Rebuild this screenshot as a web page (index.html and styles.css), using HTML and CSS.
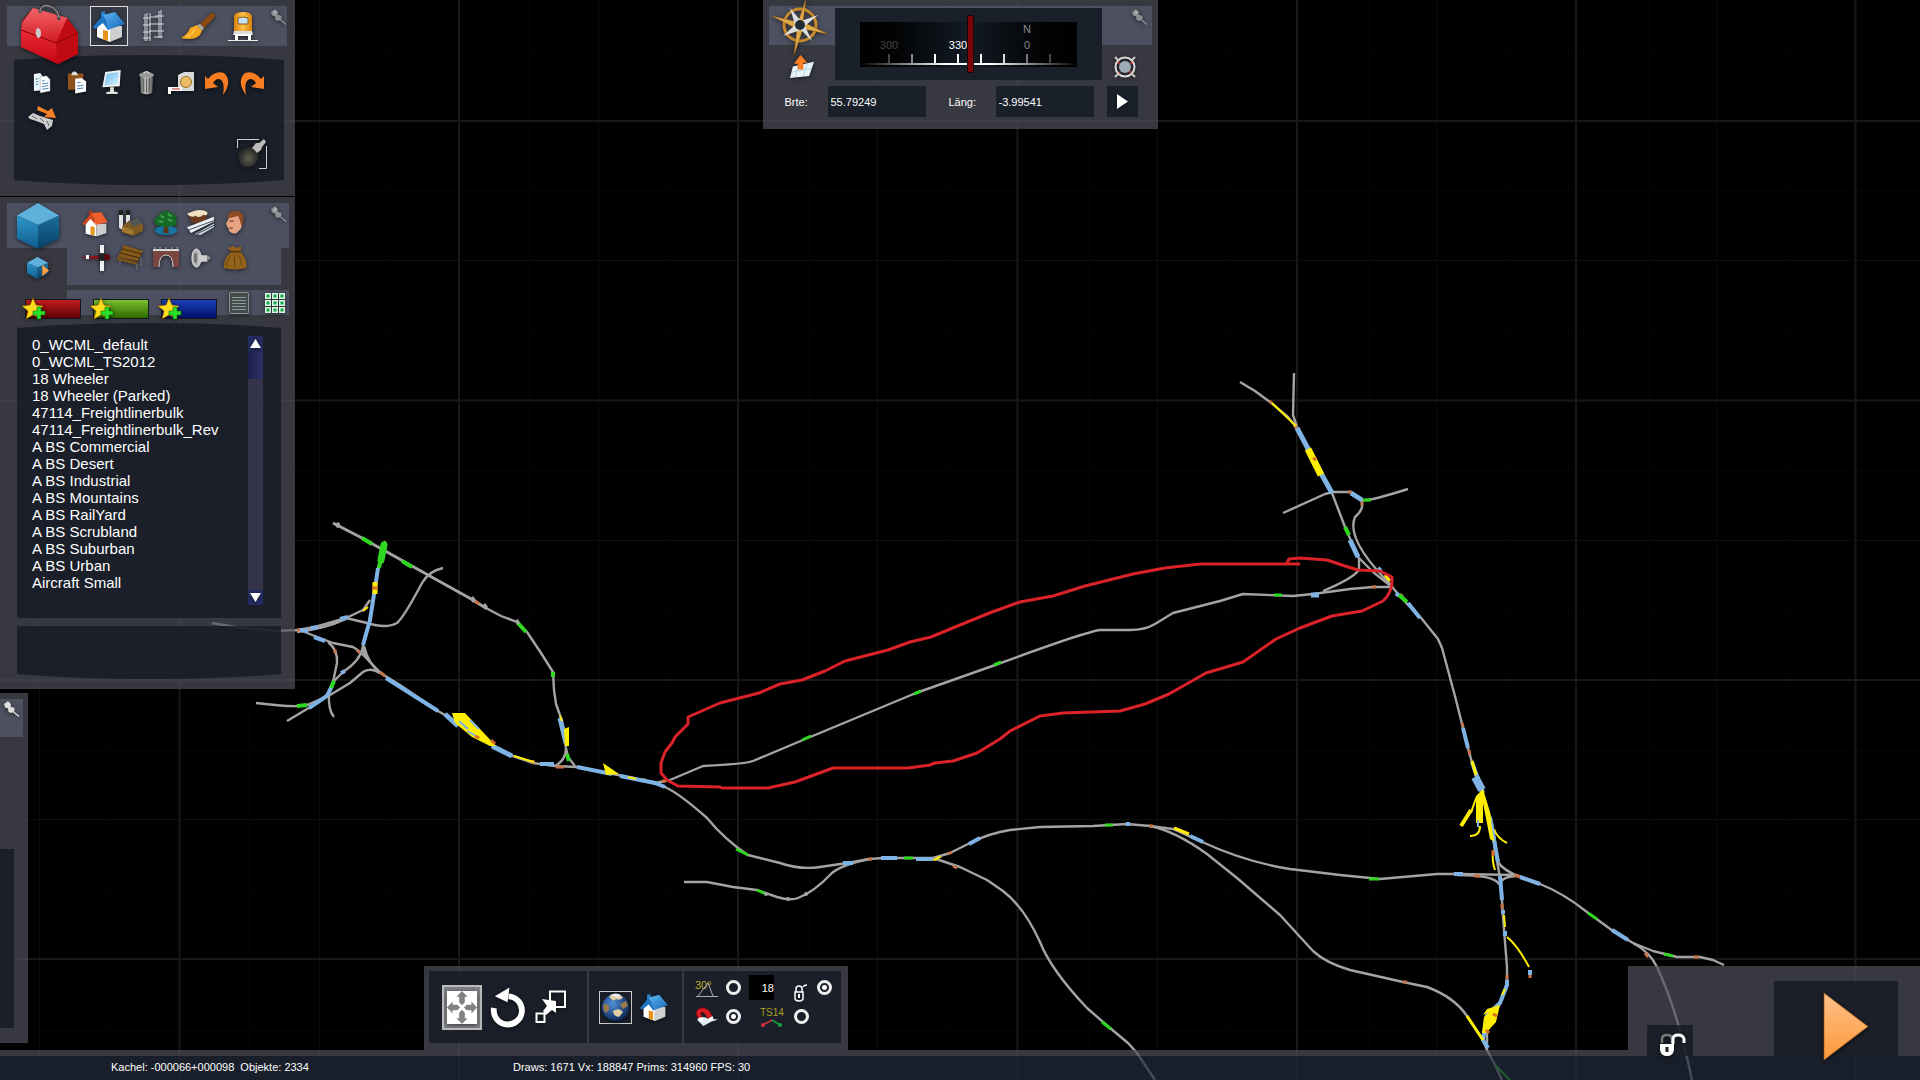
FILE: index.html
```html
<!DOCTYPE html>
<html lang="de">
<head>
<meta charset="utf-8">
<meta name="viewport" content="width=device-width, initial-scale=1">
<title>Streckeneditor</title>
<link rel="stylesheet" href="styles.css">
</head>
<body>
<svg class="defs" width="0" height="0" aria-hidden="true">
  <defs>
    <linearGradient id="gBlueRoof" x1="0" y1="0" x2="1" y2="1"><stop offset="0" stop-color="#5db8f5"/><stop offset="1" stop-color="#1463b4"/></linearGradient>
    <linearGradient id="gRed" x1="0" y1="0" x2="0" y2="1"><stop offset="0" stop-color="#f4666a"/><stop offset="1" stop-color="#d01820"/></linearGradient>
    <linearGradient id="gRedFront" x1="0" y1="0" x2="0" y2="1"><stop offset="0" stop-color="#e82a34"/><stop offset="1" stop-color="#c40812"/></linearGradient>
    <linearGradient id="gOrange" x1="0" y1="0" x2="0" y2="1"><stop offset="0" stop-color="#ffc08a"/><stop offset="1" stop-color="#ff9838"/></linearGradient>
    <linearGradient id="gTrain" x1="0" y1="0" x2="1" y2="0"><stop offset="0" stop-color="#d8820c"/><stop offset=".5" stop-color="#ffc04a"/><stop offset="1" stop-color="#d8820c"/></linearGradient>
    <linearGradient id="gSteel" x1="0" y1="0" x2="1" y2="0"><stop offset="0" stop-color="#555"/><stop offset=".45" stop-color="#c8c8c8"/><stop offset="1" stop-color="#555"/></linearGradient>
    <linearGradient id="gScreen" x1="0" y1="0" x2="1" y2="1"><stop offset="0" stop-color="#6db9ea"/><stop offset="1" stop-color="#d4f3ff"/></linearGradient>
    <linearGradient id="gCubeL" x1="0" y1="0" x2="0" y2="1"><stop offset="0" stop-color="#2f97c9"/><stop offset="1" stop-color="#0d5c8c"/></linearGradient>
    <linearGradient id="gCubeR" x1="0" y1="0" x2="0" y2="1"><stop offset="0" stop-color="#1b6f9f"/><stop offset="1" stop-color="#0a4066"/></linearGradient>
    <linearGradient id="gGauge" x1="0" y1="0" x2="1" y2="0"><stop offset="0" stop-color="#000"/><stop offset=".15" stop-color="#020304"/><stop offset=".5" stop-color="#141b25"/><stop offset=".85" stop-color="#020304"/><stop offset="1" stop-color="#000"/></linearGradient>
    <linearGradient id="gLine" x1="0" y1="0" x2="1" y2="0"><stop offset="0" stop-color="#fff" stop-opacity="0"/><stop offset=".4" stop-color="#fff"/><stop offset=".6" stop-color="#fff"/><stop offset="1" stop-color="#fff" stop-opacity="0"/></linearGradient>
    <radialGradient id="gBeam" cx=".5" cy=".6" r=".6"><stop offset="0" stop-color="#625f50"/><stop offset="1" stop-color="#14171c"/></radialGradient>
    <radialGradient id="gGlobe" cx=".4" cy=".35" r=".7"><stop offset="0" stop-color="#4f8fd8"/><stop offset="1" stop-color="#0a2350"/></radialGradient>
    <pattern id="gridFine" x="39" y="50" width="140" height="140" patternUnits="userSpaceOnUse"><path d="M70.500 0V140M0 1.500H140" stroke="#060606"/></pattern>
    <symbol id="pin" viewBox="0 0 18 18"><path d="M2 4 L6 1 L9 4 L8.500 6.500 L12.500 8 L12.500 11 L9.500 13 L6.500 12 L6 8.500 L3 7.500Z" fill="currentColor"/><path d="M11 11.500L17 16.500" stroke="currentColor" stroke-width="1.500"/><path d="M4 4l3-1 1 1-2 3z" fill="#fff" opacity=".3"/></symbol>
    <symbol id="home" viewBox="0 0 32 34"><path d="M4 19V28L17 33V17L10 10Z" fill="#fff"/><path d="M17 33L29 28V17L17 17Z" fill="#cfcfcf"/><path d="M10 21l5 1v10l-5-2z" fill="#e8921c"/><path d="M8 3l4-1v6l-4 3z" fill="#2a7fc8"/><path d="M0 18L10 6L17 20L15 21L10 14L2 20Z" fill="#1d74c4"/><path d="M10 6L22 3L32 15L17 20Z" fill="url(#gBlueRoof)"/></symbol>
    <symbol id="star" viewBox="0 0 24 22"><path d="M11 0L14 7L21 8L16 13L18 20L11 17L4 21L6 13L0 8L8 7Z" fill="#ffdc1e" stroke="#8a5a00" stroke-width=".6"/><path d="M15 9h4v4h4v4h-4v4h-4v-4h-4v-4h4z" fill="#2ae02a" stroke="#087008" stroke-width=".6"/></symbol>
  </defs>
</svg>

<svg class="map" viewBox="0 0 1920 1080" preserveAspectRatio="xMidYMid slice" role="img" aria-label="Gleisplan">
  <rect width="1920" height="1080" fill="#000"/>
  <rect width="1920" height="1080" fill="url(#gridFine)"/>
  <path class="grid-mid" d="M39.500 0V1080M319.500 0V1080M598.500 0V1080M877.500 0V1080M1157.500 0V1080M1436.500 0V1080M1716.500 0V1080M0 260.500H1920M0 540.500H1920M0 819.500H1920"/>
  <path class="grid-main" d="M179.500 0V1080M459 0V1080M738 0V1080M1017.500 0V1080M1297 0V1080M1576 0V1080M1855.500 0V1080M0 121H1920M0 400.500H1920M0 680H1920M0 959H1920"/>

  <g class="track">
    <path stroke-width="3" d="M333 523L362 538L428 575L473 600L484 607"/>
    <path d="M484 607L501 616L517 622L527 632L541 653L553 672L554 690L556 704L561 718L566 748L568 757L575 766M566 748Q566 760 555 766"/>
    <path d="M212 623L235 627L275 631L297 630L315 627L346 618L363 610L370 600M297 632Q325 629 346 619"/>
    <path d="M385 541L378 568L375 588L372 607L369 623L363 645Q361 656 382 674M364 646Q368 663 380 673"/>
    <path d="M346 618L367 623Q386 629 397 623Q404 617 422 583Q429 571 443 568"/>
    <path d="M300 630L317 637L333 643L353 647Q362 652 380 673"/>
    <path d="M328 642Q338 650 337 663L333 682L329 693Q328 710 334 717"/>
    <path d="M363 647Q360 661 343 672L333 682L327 695L312 706L287 721"/>
    <path d="M380 673Q370 667 363 672L350 683L330 695L307 705Q295 708 256 703"/>
    <path d="M382 674L400 685L438 711L450 718L493 746L510 755L533 763L555 766L577 767L603 772L633 778L655 783"/>
    <path d="M655 783L665 787Q680 794 707 818Q725 840 748 855L780 863Q800 870 820 867L847 863L870 859L883 858L933 858L950 853L970 843Q990 833 1010 830L1040 827L1093 826L1127 824L1150 826L1173 829L1200 841Q1245 862 1290 869L1340 875L1380 879L1437 874L1457 874L1517 875L1540 884Q1563 893 1587 912L1613 931L1633 943L1653 951L1677 957L1700 957L1713 960L1724 965"/>
    <path d="M1633 943Q1650 952 1657 967Q1678 1012 1692 1080"/>
    <path d="M684 882H707L733 887L757 890L777 897Q790 901 798 898Q814 892 832 873Q843 864 870 859"/>
    <path d="M933 858L960 867L987 880L1003 891Q1024 907 1040 942Q1051 970 1087 1008L1110 1028L1128 1043L1137 1053L1155 1080"/>
    <path d="M1150 826Q1175 831 1207 854L1237 878L1280 915L1313 951Q1326 963 1350 970L1403 982L1427 987Q1454 997 1467 1016L1483 1040L1487 1050L1495 1065L1502 1080"/>
    <path d="M1240 382L1255 391L1270 402L1288 417L1297 428L1310 453L1322 475L1332 493L1345 527L1358 557L1373 572L1392 587L1408 605L1422 619L1438 639L1442 648L1456 700L1469 752L1477 780L1490 817L1495 850L1501 883L1503 917L1507 967V983L1500 1003L1487 1028V1050"/>
    <path d="M1294 373L1293 415L1297 427M1283 513L1325 494L1333 492H1350L1362 500Q1367 502 1408 489M1362 500V507Q1361 512 1355 517Q1345 540 1393 587M1359 557V570Q1352 579 1323 591"/>
    <path d="M1390 587H1373L1350 589L1313 594L1293 596L1243 594L1220 601L1173 613L1155 624Q1145 630 1130 630H1100Q1085 632 998 664L916 693L803 740L753 761Q745 764 703 766L670 780L655 783"/>
    <path d="M1498 862Q1503 870 1518 876M1457 875Q1494 875 1499 884Q1503 876 1518 876"/>
  </g>

  <g class="edge">
    <path d="M297 630h3M380 672l5 4M556 767h8M640 780h6M662 781h4M1269 401l3 2M1294 425l3 4M1348 492h4M1362 502v3M1372 587h4M1400 594l3 3M1462 723l1 4M1469 750l1 5M1514 875l7 2M1474 876h6M1502 904v5M1507 975v4M1403 982h4M1694 957h5M1645 953l3 4M868 859h4M948 854l4-2M953 866l4 2M1149 826h4M475 601l4 3M335 649v4M357 650l3 3M531 762h4"/>
  </g>
  <g class="signal">
    <path stroke-width="4" d="M378 568L375 588L370 620L363 645M300 630l8 1M311 628l7-1M340 619l8-2M314 637l11 4M386 678L438 711"/>
    <path stroke-width="4" d="M341 673l4-2M332 686l-5 10L309 708"/>
    <path stroke-width="5" d="M445 714L458 726M492 746L512 756M560 718l6 25M1297 428L1322 475L1332 493M1351 493l11 7M1350 540l8 17M1311 595h8"/>
    <path stroke-width="4" d="M540 764h14M577 767L612 774M620 776l35 7l10 4M843 863h10M881 858h16M916 859h17M969 844l11-6M1126 824h4M1190 836l13 6M1396 593l3 3M1408 603l12 15M1378 568l3 3"/>
    <path stroke-width="4" d="M1463 728L1468 748M1472 762L1483 793M1454 874h9M1520 877l20 7M1612 930l16 10M1490 817l8 45M1500 876l2 24M1503 910v4M1505 931v5M1507 980v5L1500 1003L1487 1015L1483 1040L1488 1048M1530 970v5"/>
    <path stroke-width="8" d="M1475 777L1482 790"/>
  </g>
  <g class="siding">
    <path stroke-width="5" d="M375 582v12"/>
    <path stroke-width="2" d="M363 611l5-4M514 756l20 6M560 716l2 5M628 777l8 2M1272 403L1296 426M1504 915l1 12M1507 937Q1518 946 1529 967M1505 989l-3 6"/>
    <path class="fill" d="M452 713h13l31 33h-6l-18-9-17-14zM564 729l5-2v19h-4zM603 763l16 11-13 1zM932 860l7-4 3 1-7 4z"/>
    <path stroke-width="3" d="M1174 828l15 6M1467 1016l16 24M1472 761l4 14M1385 575l5 6"/>
    <path stroke-width="7" d="M1308 449L1321 475"/>
    <path class="fill" d="M1483 789l7 23 5 30-5-3-7-36v20h-7v-22l-4 12-2-1 6-16z"/>
    <path stroke-width="4" d="M1471 810L1461 826"/>
    <path stroke-width="2" d="M1480 826q0 10-10 10M1494 829q3 9 13 14M1493 852q-1 10 2 18"/>
    <path class="fill" d="M1500 1005l-4 17-10 11h-4l2-16 5-5-6 3 4-6z"/>
  </g>
  <path d="M459 721l9 8m2-9l9 9m-12 2l9 5M1478 820v7M1492 822l4 24" stroke="#7fb2e5" stroke-width="2"/>
  <g class="marker">
    <path stroke-width="7" stroke-linecap="round" d="M384 545L381 560"/>
    <path stroke-width="4" d="M381 558l-2 10M362 538l10 6M402 561l10 6M518 623l8 9M553 672v5M334 681l-3 7M297 706l10-1M567 754l2 7M1345 527l4 8M1399 595l8 7"/>
    <path d="M802 740l9-4M736 849l12 6M757 890l9 4M904 858h9M1105 825h8M1274 595h8M1369 879h10M1363 500h8M1588 913l9 6M1664 954l9 2M1102 1022l9 7M914 694l7-3M994 665l7-3"/>
    <path d="M1495 1065l15 15" stroke-width="2"/>
  </g>
  <path d="M372 588h6M475 736l4 2M491 740l4 4M1313 458l3 2M1493 850v6M1486 1030l3 3M1493 1014l4 2M1530 975v3" stroke="#d8702c" stroke-width="3"/>
  <g fill="#a5a5a5"><path d="M334 524l5-2 2 5-4 1zM470 599l3-3 3 4-3 3zM482 606l3-3 3 4-3 3zM515 621l3-2 2 4-3 2z"/><circle cx="766" cy="894" r="2"/><circle cx="788" cy="899" r="2"/><circle cx="806" cy="894" r="2"/></g>
  <path class="outline" d="M1299 564H1200L1165 568L1133 574L1085 586L1053 596L1020 602L992 612L960 625L931 637L910 642L888 650L845 661L825 671L802 680L780 684L759 693L720 703L688 717V724L675 737L672 743L665 752L661 763V773L667 780L678 786L720 787L722 788H768L795 782L833 768H908L930 765L935 763L953 761L977 753L1000 739L1010 731L1040 716L1063 713L1120 711L1145 704L1169 694L1206 673L1243 662L1276 639L1300 628L1332 616L1362 611L1383 601Q1393 592 1392 577L1380 571L1358 570L1345 566L1327 560L1300 558L1289 559L1287 563"/>
</svg>

<div class="hud">
  <aside class="left">
    <section class="window tools-window" aria-label="Werkzeuge">
      <div class="tabs">
        <button class="toolbox" aria-label="Werkzeugkasten"><svg width="58" height="60" viewBox="0 0 58 60"><path d="M1 16L12 3L46 13L57 28V49L37 59L0 42Z" fill="#a80810"/><path d="M1 18L12 3L47 13L35 38L0 25Z" fill="url(#gRed)"/><path d="M0 25L35 38L37 59L0 42Z" fill="url(#gRedFront)"/><path d="M35 38L46 13L57 28V49L37 59Z" fill="#c00a14"/><path d="M0 25L35 38L57 28" stroke="#8c0008" fill="none"/><path d="M19 8C18-4 38 0 38 15" stroke="#444" stroke-width="3" fill="none"/><path d="M19 7C19-4 37 0 38 13" stroke="#aaa" stroke-width="1" fill="none"/><path d="M16 23q4 0 4 5t-3 5q-4-4-1-10z" fill="#ccc"/></svg></button>
        <button class="tab selected" aria-label="Szenerie"><svg width="32" height="34"><use href="#home"/></svg></button>
        <button class="tab" aria-label="Gleise"><svg width="24" height="34" viewBox="0 0 24 34"><path d="M3 5V32M5 4V32M17 2V29M19 1V29M1 9h7M13 7h9M1 16h7M7 15h15M1 23h7M7 22h15M1 29h7M12 28h9M8 4v28M8 8h8" stroke="#d8dde2" stroke-width="1" fill="none"/></svg></button>
        <button class="tab" aria-label="Pinsel"><svg width="34" height="28" viewBox="0 0 34 28"><path d="M18 13L30 1L34 2L33 6L22 17Z" fill="#8a4a12"/><path d="M16 13l3-1 4 4-2 3z" fill="#aaa"/><path d="M0 26Q7 22 9 16L16 13L21 19Q17 30 0 26Z" fill="#f7a81c"/><path d="M5 25Q12 23 13 17" stroke="#ffe070" fill="none"/></svg></button>
        <button class="tab" aria-label="Fahrzeuge"><svg width="32" height="32" viewBox="0 0 32 32"><path d="M7 6Q8 2 16 2T25 6V22H7Z" fill="url(#gTrain)"/><path d="M11 8Q16 6 21 8V14H11Z" fill="#bfe2f4" stroke="#8c5a10"/><path d="M7 21H25L26 25H6Z" fill="#ddd"/><path d="M8 24v6h3v-4h10v4h3v-6" fill="#fff"/><path d="M1 30.500H31" stroke="#eee" stroke-width="1"/></svg></button>
        <button class="pin" aria-label="Anheften"><svg width="18" height="18"><use href="#pin"/></svg></button>
      </div>
      <div class="well actions-well">
        <div class="icon-grid seven">
          <button aria-label="Kopieren"><svg width="18" height="22" viewBox="0 0 20 24"><path d="M1 2l7-1 3 4v15l-10 1z" fill="#eaf6fb"/><path d="M8 5l7-1 4 4v13l-11 2z" fill="#fff" stroke="#789" stroke-width=".5"/><path d="M10 10l3-1m-3 4l7-1m-7 4l7-1m-7 4l7-1M3 8l3-1m-3 4l3-1m-3 4l3-1" stroke="#3c7cac"/></svg></button>
          <button aria-label="Einfügen"><svg width="20" height="25" viewBox="0 0 22 26"><path d="M1 3h17v18H1z" fill="#8b521c"/><path d="M5 5q0-4 3-4t4 4z" fill="#ddd"/><path d="M9 9l7-1 5 4v11l-12 2z" fill="#fff"/><path d="M11 13h4m-4 4l7-1m-7 4l7-1" stroke="#3c7cac"/></svg></button>
          <button aria-label="Bildschirm"><svg width="22" height="27" viewBox="0 0 22 28"><path d="M4 3L20 1L19 18L1 19Z" fill="#f2f2f2"/><path d="M5.500 5L18 3L17 16L3 17Z" fill="url(#gScreen)"/><path d="M9 19h4v5H9zM5 24q6-2 12 0v2H5z" fill="#ddd"/></svg></button>
          <button aria-label="Löschen"><svg width="17" height="25" viewBox="0 0 18 26"><path d="M2 7H16L15 24Q9 27 3 24Z" fill="url(#gSteel)"/><ellipse cx="9" cy="5" rx="8" ry="3" fill="#999"/><path d="M6 3q3-3 6 0" stroke="#ddd" fill="none" stroke-width="1.500"/><path d="M6 9v14m3-14v15m3-15v14" stroke="#555"/></svg></button>
          <button aria-label="Messen"><svg width="27" height="24" viewBox="0 0 27 24"><path d="M10 4L16 1H26V20H10Z" fill="#d8d8d8"/><circle cx="18" cy="11" r="5.500" fill="#e8bc68" stroke="#a07018"/><path d="M0 16H14V20H3V23H0Z" fill="#fff"/><path d="M4 18H12" stroke="#b22" stroke-width="1"/></svg></button>
          <button aria-label="Rückgängig"><svg width="24" height="24" viewBox="0 0 24 24"><path d="M0 5L3 8Q10-1 19 2Q28 10 18 24Q20 12 16 9Q12 6 8 12L13 16L0 18Z" fill="#f77c22"/></svg></button>
          <button aria-label="Wiederholen"><svg width="24" height="24" viewBox="0 0 24 24"><path d="M24 5L21 8Q14-1 5 2Q-4 10 6 24Q4 12 8 9Q12 6 16 12L11 16L24 18Z" fill="#f77c22"/></svg></button>
          <button aria-label="Verschieben"><svg width="28" height="26" viewBox="0 0 28 26"><path d="M0 12L5 8L12 11L25 15L24 21L19 25L16 19L8 16L2 14Z" fill="#ccc"/><path d="M4 11l5 3m3-1l4 4m3-1l2 5" stroke="#666"/><path d="M10 1L20 6L24 3L28 13L16 12L19 9L9 5Z" fill="#f58026"/></svg></button>
        </div>
        <button class="torch" aria-label="Taschenlampe"><svg width="30" height="30" viewBox="0 0 30 30"><path d="M.500 9V.500H22M29.500 7V29.500H22" stroke="#d0d0d0" fill="none"/><path d="M2 12L15 6L22 15Q20 30 6 28Q-1 22 2 12Z" fill="url(#gBeam)"/><path d="M15 9L19 4H22L27 0L29 3L25 8L24 11L20 14Q18 11 15 9Z" fill="#bbb"/></svg></button>
      </div>
    </section>

    <section class="window browser-window" aria-label="Objektliste">
      <div class="browser-head">
        <div class="cubes">
          <button aria-label="Objekte"><svg width="44" height="46" viewBox="0 0 44 48"><path d="M22 23L44 13V37L22 48Z" fill="url(#gCubeR)"/><path d="M22 0L44 13L22 23L0 13Z" fill="#5fb0da"/><path d="M0 13L22 23V48L0 37Z" fill="url(#gCubeL)"/></svg></button>
          <button aria-label="Weitere Objekte"><svg width="23" height="23" viewBox="0 0 24 24"><path d="M11 11L22 6V17L11 23Z" fill="url(#gCubeR)"/><path d="M11 0L22 6L11 11L0 6Z" fill="#5fb0da"/><path d="M0 6L11 11V23L0 17Z" fill="url(#gCubeL)"/><path d="M16 8L23 14L16 20Z" fill="#ff9c40"/></svg></button>
        </div>
        <div class="icon-grid five">
          <button aria-label="Gebäude"><svg width="27" height="28" viewBox="0 0 32 34"><path d="M4 19V30L17 33V17L10 10Z" fill="#fff"/><path d="M17 33L29 29V17Z" fill="#ccc"/><path d="M17 18H29V29L17 33Z" fill="#ccc"/><path d="M10 21l5 1v10l-5-1z" fill="#e8921c"/><path d="M8 2h5v6H8z" fill="#a03a1c"/><path d="M0 18L11 5L17 20L10 12L2 20Z" fill="#d8471c"/><path d="M11 5L23 4L31 16L17 19Z" fill="#f0602c"/></svg></button>
          <button aria-label="Industrie"><svg width="26" height="26" viewBox="0 0 26 26"><path d="M1 2h4v18l-4-2zM8 2h4v18H8z" fill="#e0e0e0"/><path d="M1 0h4v5H1zM8 0h4v5H8z" fill="#222"/><path d="M6 14L13 10L25 14V21L15 26L4 22Z" fill="#7c5a22"/><path d="M10 11L20 8L25 13L15 17Z" fill="#555"/><path d="M4 16l11 4v5L4 22z" fill="#a1762f"/></svg></button>
          <button aria-label="Vegetation"><svg width="24" height="26" viewBox="0 0 26 28"><ellipse cx="13" cy="22" rx="12" ry="5" fill="#1574a0"/><path d="M11 14h4l1 11h-6z" fill="#5b3616"/><path d="M3 17Q-3 11 5 6Q11-3 18 3Q26 5 24 12Q26 18 19 17Q13 20 9 17Z" fill="#166a26"/><path d="M7 6l4 2m4-4l4 3M5 12l5 1m5-3l5 2" stroke="#3da548" stroke-width="2"/></svg></button>
          <button aria-label="Gelände"><svg width="27" height="25" viewBox="0 0 28 26"><path d="M2 4Q14-2 21 2L19 13Q9 16 4 12Z" fill="#6b3a1f"/><path d="M0 4Q13-3 21 2Q22 7 17 5Q12 9 9 6Q4 9 0 4Z" fill="#eee2c2"/><path d="M0 18L28 7V12L4 24Z" fill="#e8f1f8"/><path d="M8 25L28 14V18L14 26Z" fill="#c3d4e0"/><path d="M1 21L28 11M10 25L28 16" stroke="#444"/></svg></button>
          <button aria-label="Personen"><svg width="19" height="25" viewBox="0 0 22 27"><path d="M4 7L17 5Q21 13 17 21L12 26Q4 27 3 21L0 15Z" fill="#e6a384"/><path d="M2 9Q1 1 11 0Q22 1 20 12L18 18L16 11L14 6Z" fill="#8f4b21"/><path d="M4 12h5m-5 8h4" stroke="#7d3e2b" stroke-width="1.500"/></svg></button>
          <button aria-label="Signale"><svg width="28" height="26" viewBox="0 0 28 26"><path d="M18 0h4v26h-4z" fill="#eee"/><path d="M0 12L28 10V15L0 13Z" fill="#8c1418"/><path d="M4 10h3v4H4z" fill="#fff"/><circle cx="20" cy="12" r="4" fill="#222"/><circle cx="25" cy="12" r="3" fill="#5c0c10"/></svg></button>
          <button aria-label="Bänke"><svg width="27" height="25" viewBox="0 0 27 25"><path d="M7 0L26 6L21 16L1 12Z" fill="#86591a"/><path d="M5 4l20 5M3 8l20 5M0 13l20 5" stroke="#3d2606"/><path d="M0 12L20 17V20L0 15Z" fill="#7c5218"/><path d="M3 15v5m17-1v6m4-13v9" stroke="#777" stroke-width="1"/></svg></button>
          <button aria-label="Brücken"><svg width="26" height="22" viewBox="0 0 26 22"><path d="M0 4H26V20H20Q19 8 13 8T6 20H0Z" fill="#7b4540"/><path d="M0 2H26V4H0Z" fill="#ddd"/><path d="M6 20Q6 8 13 8T20 20" stroke="#ccc" fill="none"/><path d="M2 0v3m5-3v3m6-3v3m6-3v3m5-3v3" stroke="#aaa"/></svg></button>
          <button aria-label="Klänge"><svg width="20" height="22" viewBox="0 0 22 22"><ellipse cx="6" cy="11" rx="5" ry="10" fill="#b8b8b8" stroke="#eee"/><ellipse cx="5" cy="11" rx="2" ry="6" fill="#777"/><path d="M8 7L13 8H18V15H13L8 16Z" fill="#ccc"/><circle cx="19" cy="11" r="2" fill="#999"/></svg></button>
          <button aria-label="Fracht"><svg width="25" height="25" viewBox="0 0 26 26"><path d="M9 7L5 3L11 1L14 3L19 1L18 7Q26 15 24 24Q12 27 1 24Q0 14 9 7Z" fill="#92611a"/><path d="M8 7h10" stroke="#5b3808" stroke-width="2"/><path d="M8 11q-5 5-4 11m8-12v13m4-13q4 5 3 11" stroke="#6d430a" fill="none"/></svg></button>
        </div>
        <button class="pin" aria-label="Anheften"><svg width="18" height="18"><use href="#pin"/></svg></button>
      </div>
      <div class="filters">
        <button class="filter red" aria-label="Roter Filter"><svg width="24" height="22"><use href="#star"/></svg></button>
        <button class="filter green" aria-label="Grüner Filter"><svg width="24" height="22"><use href="#star"/></svg></button>
        <button class="filter blue" aria-label="Blauer Filter"><svg width="24" height="22"><use href="#star"/></svg></button>
        <button class="view" aria-label="Liste"><svg width="20" height="22" viewBox="0 0 20 22"><rect x=".500" y=".500" width="19" height="21" rx="1" fill="#444b4d" stroke="#8a9490"/><path d="M3 5.500h14m-14 3h14m-14 3h14m-14 3h14m-14 3h14" stroke="#8e9894"/></svg></button>
        <button class="view" aria-label="Kacheln"><svg width="20" height="20" viewBox="0 0 20 20"><path d="M0 0h6v6H0zM7 0h6v6H7zM14 0h6v6h-6zM0 7h6v6H0zM7 7h6v6H7zM14 7h6v6h-6zM0 14h6v6H0zM7 14h6v6H7zM14 14h6v6h-6z" fill="#d8f5e2"/><path d="M1.500 1.500h3v3h-3zM8.500 1.500h3v3h-3zM15.500 1.500h3v3h-3zM1.500 8.500h3v3h-3zM8.500 8.500h3v3h-3zM15.500 8.500h3v3h-3zM1.500 15.500h3v3h-3zM8.500 15.500h3v3h-3zM15.500 15.500h3v3h-3z" fill="#12a84a"/></svg></button>
      </div>
      <div class="well list-well">
        <ul class="objects">
          <li>0_WCML_default</li><li>0_WCML_TS2012</li><li>18 Wheeler</li><li>18 Wheeler (Parked)</li><li>47114_Freightlinerbulk</li><li>47114_Freightlinerbulk_Rev</li><li>A BS Commercial</li><li>A BS Desert</li><li>A BS Industrial</li><li>A BS Mountains</li><li>A BS RailYard</li><li>A BS Scrubland</li><li>A BS Suburban</li><li>A BS Urban</li><li>Aircraft Small</li>
        </ul>
        <div class="scrollbar">
          <button aria-label="Nach oben"><svg width="15" height="15" viewBox="0 0 15 15"><path d="M2 12L7.500 3L13 12Z" fill="#fff"/></svg></button>
          <div class="scroll-track"><div class="thumb"></div></div>
          <button aria-label="Nach unten"><svg width="15" height="15" viewBox="0 0 15 15"><path d="M2 3L7.500 12L13 3Z" fill="#fff"/></svg></button>
        </div>
      </div>
      <div class="well info-well"></div>
    </section>

    <section class="window drawer" aria-label="Eigenschaften">
      <div class="drawer-head"><button class="pin active" aria-label="Lösen"><svg width="18" height="18"><use href="#pin"/></svg></button></div>
      <div class="drawer-well"></div>
    </section>
  </aside>

  <section class="window compass" aria-label="Navigation">
    <div class="compass-head">
      <div class="compass-side">
        <button class="rose" aria-label="Kompass"><svg width="56" height="56" viewBox="0 0 56 56"><circle cx="28" cy="26" r="16" fill="none" stroke="#c58a2c" stroke-width="3"/><path d="M34 0L31 23L56 35L31 30L22 56L25 30L0 17L26 23Z" fill="#e0a94a" stroke="#8b5a12" stroke-width=".5"/><path d="M18 9L29 22L46 16L33 27L40 42L29 31L11 37L23 26Z" fill="#ddd"/><circle cx="28" cy="26" r="5" fill="#222a33"/></svg></button>
        <button aria-label="Zur Karte"><svg width="24" height="24" viewBox="0 0 25 25"><path d="M3 12L25 7L20 22L0 24Z" fill="#e8f4fa"/><path d="M8 11L6 23M18 9l-4 13M2 18l20-4" stroke="#b4d2e2"/><path d="M11 0L18 8H14V15H8V9H4Z" fill="#f77c22"/></svg></button>
      </div>
      <svg class="gauge" viewBox="0 0 267 72" role="img" aria-label="Kompass 330 Grad">
        <rect x="25" y="14" width="217" height="45" fill="url(#gGauge)"/>
        <path d="M54 46v9" stroke="#444" stroke-width="2"/><path d="M77 46v9" stroke="#888" stroke-width="2"/><path d="M100 46v9M146 46v9M123 46v9" stroke="#fff" stroke-width="2"/><path d="M169 46v9" stroke="#ddd" stroke-width="2"/><path d="M192 46v9" stroke="#777" stroke-width="2"/><path d="M215 46v9" stroke="#444" stroke-width="2"/>
        <rect x="25" y="55" width="217" height="2" fill="url(#gLine)"/>
        <g text-anchor="middle"><text x="54" y="41" fill="#444">300</text><text x="123" y="41" fill="#fff">330</text><text x="192" y="25" fill="#888">N</text><text x="192" y="41" fill="#888">0</text></g>
        <rect x="133" y="8" width="5" height="56" fill="#7c0508"/><rect x="132.500" y="7.500" width="6" height="57" fill="none" stroke="#1a0505"/>
      </svg>
      <div class="compass-side right">
        <button class="pin" aria-label="Anheften"><svg width="18" height="18"><use href="#pin"/></svg></button>
        <button class="aim" aria-label="Zentrieren"><svg width="24" height="24" viewBox="0 0 24 24"><circle cx="12" cy="12" r="9.500" fill="none" stroke="#ddd" stroke-width="2"/><circle cx="12" cy="12" r="6" fill="#9cacb4"/><path d="M2 2l4 4m12 12l4 4M22 2l-4 4M6 18l-4 4" stroke="#ccc" stroke-width="2"/><path d="M5 9l1-2m12 0l1 2M6 17l1 1m11-2l-1 2" stroke="#c33" stroke-width="2"/></svg></button>
      </div>
    </div>
    <form class="coords">
      <label for="lat">Brte:</label><input id="lat" value="55.79249">
      <label for="lon">Läng:</label><input id="lon" value="-3.99541">
      <button type="button" aria-label="Gehe zu"><svg width="12" height="15" viewBox="0 0 12 15"><path d="M1 0L12 7.500L1 15Z" fill="#fff"/></svg></button>
    </form>
  </section>

  <section class="window transform" aria-label="Transformieren">
    <div class="group modes">
      <button class="move" aria-label="Bewegen"><svg width="32" height="35" viewBox="0 0 34 37"><path d="M1 1H33V36H1Z" fill="#fff"/><path d="M17 1L23 7H20V13L17 16L14 13V7H11ZM17 36L23 30H20V24L17 21L14 24V30H11ZM1 18.500L7 12V15.500H12L15 18.500L12 21.500H7V25ZM33 18.500L27 12V15.500H22L19 18.500L22 21.500H27V25Z" fill="#808286"/></svg></button>
      <button aria-label="Drehen"><svg width="35" height="40" viewBox="0 0 36 40"><path d="M3 21A14.500 14.500 0 1 0 18 9" fill="none" stroke="#fff" stroke-width="6"/><path d="M4 9L19 0L17 15Z" fill="#fff"/></svg></button>
      <button aria-label="Skalieren"><svg width="32" height="34" viewBox="0 0 32 34"><path d="M15 1.500H30V17H15ZM1.500 23.500H9.500V32H1.500Z" fill="none" stroke="#fff" stroke-width="2"/><path d="M7 9L21 11L21 23L17 20L11 25L8 21L12 16Z" fill="#fff"/></svg></button>
    </div>
    <div class="group world">
      <button class="globe" aria-label="Welt"><svg width="29" height="29" viewBox="0 0 29 29"><circle cx="14.500" cy="14.500" r="13.500" fill="url(#gGlobe)"/><path d="M8 3Q15-1 22 4Q20 8 15 6Q12 10 8 3ZM12 18Q18 14 22 19L18 24Q12 23 12 18Z" fill="#e2cfa4"/><path d="M3 11Q9 10 8 17L5 20Q1 17 3 11ZM19 11l6-3 2 5-5 3z" fill="#9a7a4c"/><path d="M9 2q6-3 11 0l-3 3-4-2z" fill="#eee"/></svg></button>
      <button aria-label="Lokal"><svg width="28" height="30"><use href="#home"/></svg></button>
    </div>
    <div class="group snaps">
      <svg width="24" height="20" viewBox="0 0 24 20" role="img" aria-label="Winkelraster"><text x="0" y="11" fill="#b4ac22">30°</text><path d="M3 18L13 5L18 18M1 18.500H23" stroke="#b5a9b8" fill="none"/></svg>
      <input type="radio" name="angle" aria-label="Winkelraster">
      <input class="step" value="18" aria-label="Rasterwert">
      <svg class="padlock" width="14" height="18" viewBox="0 0 14 18" role="img" aria-label="Sperre"><path d="M1 8H9V14Q9 17 5 17T1 14ZM2 8V5Q2 2 5 2T8 5V8M9 3q1-2 4-2" fill="none" stroke="#fff" stroke-width="1.500"/><path d="M5 10v4" stroke="#fff" stroke-width="2"/></svg>
      <input type="radio" name="lock" aria-label="Sperre" checked>
      <svg width="24" height="20" viewBox="0 0 26 22" role="img" aria-label="Magnet"><path d="M2 14L8 11L25 14L18 16L9 21Z" fill="#dfeef6"/><path d="M3 12Q-2 3 7 1Q14 0 19 10L14 13Q10 5 7 6Q5 7 8 11Z" fill="#d91c24" stroke="#7a0408"/><path d="M3 12l5-1 1 3-4 2zM14 13l5-3 1 3-4 2z" fill="#fff"/></svg>
      <input type="radio" name="magnet" aria-label="Magnet" checked>
      <svg class="axis" width="24" height="22" viewBox="0 0 24 22" role="img" aria-label="TS14"><text x="0" y="10" fill="#a89e20">TS14</text><path d="M3 19L12 14" stroke="#d03040" stroke-width="1.500"/><path d="M12 14L20 19" stroke="#18a03a" stroke-width="1.500"/><circle cx="3" cy="19" r="2" fill="#d03040"/><circle cx="20" cy="19" r="2" fill="#18a03a"/></svg>
      <input type="radio" name="axis" aria-label="Achsen">
    </div>
  </section>

  <div class="ledge"></div>
  <section class="play-panel" aria-label="Wiedergabe">
    <button class="unlock" aria-label="Entsperrt"><svg width="26" height="23" viewBox="0 0 26 23"><path d="M2 10V6Q2 2 7 2T12 6V10" fill="none" stroke="#777" stroke-width="2.500"/><path d="M13 11V6Q13 2 18 2T24 6V10" fill="none" stroke="#fff" stroke-width="3"/><path d="M0 11H14V17Q13 23 7 23T0 17Z" fill="#fff"/><path d="M7 14v5" stroke="#19202a" stroke-width="3"/></svg></button>
    <button class="play" aria-label="Abspielen"><svg width="46" height="69" viewBox="0 0 46 69"><path d="M1 1L45 34.500L1 68Z" fill="url(#gOrange)" stroke="#a05818" stroke-width=".7"/></svg></button>
  </section>
  <footer class="status"><span class="tile">Kachel: -000066+000098&nbsp; Objekte: 2334</span><span>Draws: 1671 Vx: 188847 Prims: 314960 FPS: 30</span></footer>
</div>
</body>
</html>
```
FILE: styles.css
```css
* { box-sizing: border-box; }

:root {
  --frame: rgba(80, 80, 92, .7);
  --strip: rgba(84, 88, 106, .75);
  --well: rgba(19, 26, 36, .82);
  --bar: rgba(33, 43, 57, .73);
}

body {
  margin: 0;
  background: #000;
  color: #fff;
  font: 11px/14px "Liberation Sans", Arial, sans-serif;
}

button {
  display: flex;
  align-items: center;
  justify-content: center;
  padding: 0;
  border: 0;
  background: none;
  color: inherit;
}

svg { display: block; flex: none; overflow: visible; }
button svg { filter: drop-shadow(0 1px 2px rgba(0, 0, 0, .6)); }
.defs { position: absolute; }

/* Track map behind the windows */
.map { position: absolute; inset: 0; width: 100%; height: 100%; overflow: hidden; }
.map path { fill: none; }
.grid-mid { stroke: #0d0d0d; }
.grid-main { stroke: #181818; stroke-width: 2; }
.track { stroke: #a4a4a4; stroke-width: 2.4; stroke-linejoin: round; }
.edge { stroke: #c8744a; stroke-width: 3; }
.signal { stroke: #7fb2e5; }
.siding { stroke: #fe0; }
.map .siding .fill { fill: #fe0; stroke: none; }
.marker { stroke: #2fd820; stroke-width: 3; }
.outline { stroke: #dc2229; stroke-width: 3; stroke-linejoin: round; stroke-linecap: round; }
.map g[fill] path { fill: #a5a5a5; }

.hud {
  position: relative;
  display: grid;
  grid-template: 1fr 84px 6px 24px / 295px 1fr 292px;
  min-height: 100vh;
}

.window { background: var(--frame); }
.pin { align-self: flex-start; color: #8c8e92; }
.pin.active { color: #ddd; }

/* Dark recess with gently bowed edges */
.well { position: relative; isolation: isolate; overflow: hidden; }
.well::before {
  content: "";
  position: absolute;
  z-index: -1;
  inset: 0 -40%;
  background: var(--well);
  border-radius: 50% / 30px;
}

.left { grid-area: 1 / 1 / 3 / 2; display: flex; flex-direction: column; }

/* Tools */
.tools-window { height: 196px; padding: 6px 8px 0 7px; }
.tabs { display: flex; align-items: flex-start; height: 40px; padding-left: 14px; background: var(--strip); }
.toolbox { width: 58px; height: 58px; margin-right: 11px; z-index: 1; }
.tab { width: 38px; height: 40px; }
.tab.selected { border: 1px solid #ddd; background: #363a45; }
.tab + .tab { margin-left: 7px; }
.tabs .pin { margin: 2px 0 0 7px; }
.actions-well { height: 130px; margin: 9px 0 0 7px; padding: 10px; width: 270px; }
.icon-grid { display: grid; grid-auto-rows: 35px; }
.icon-grid.seven { grid-template-columns: repeat(7, 35px); }
.icon-grid.five { grid-template-columns: repeat(5, 35px); }
.torch { margin: 4px 0 0 213px; }

/* Object browser */
.browser-window { height: 492px; margin-top: 1px; padding: 6px 6px 0 7px; }
.browser-head {
  display: flex;
  height: 82px;
  background:
    linear-gradient(var(--strip), var(--strip)) 0 0 / 100% 45px no-repeat,
    linear-gradient(var(--strip), var(--strip)) 60px 45px / 214px 37px no-repeat;
}
.cubes { display: flex; flex-direction: column; align-items: center; gap: 8px; width: 62px; margin-right: 9px; }
.browser-head .icon-grid { padding-top: 2px; }
.browser-head .pin { margin: 2px 0 0 16px; }
.filters {
  display: flex;
  align-items: center;
  height: 25px;
  margin: 5px 0 0;
  padding: 0 3px 0 18px;
  background: linear-gradient(var(--strip), var(--strip)) 60px 0 / 222px 25px no-repeat;
}
.filter { justify-content: flex-start; width: 56px; height: 20px; margin: 12px 12px 0 0; border: 1px solid #15171c; }
.filter svg { margin-left: -4px; }
.filter.red { background: linear-gradient(#c01c20, #600004); }
.filter.green { background: linear-gradient(#7cc030, #2c6a00); }
.filter.blue { background: linear-gradient(#1c40b8, #00106c); }
.view { margin-right: 16px; }
.view:last-child { margin-right: 0; }
.list-well { display: flex; justify-content: space-between; width: 264px; height: 295px; margin: 8px 0 0 10px; padding: 13px 18px 13px 15px; }
.list-well::before { border-radius: 50% 50% 0 0 / 30px 30px 0 0; }
.info-well { width: 264px; height: 53px; margin: 8px 0 0 10px; }
.info-well::before { border-radius: 0 0 50% 50% / 0 0 30px 30px; }
.objects { margin: 0; padding: 0; list-style: none; font-size: 15px; line-height: 17px; white-space: nowrap; }
.scrollbar { display: flex; flex-direction: column; width: 15px; }
.scrollbar button { height: 15px; background: #252c62; }
.scroll-track { flex: 1; background: #33344a; }
.thumb { height: 28px; background: linear-gradient(90deg, #1c2048, #2c3168); }

/* Drawer, mostly tucked behind the left edge */
.drawer { width: 28px; height: 350px; margin-top: 4px; padding-top: 6px; }
.drawer-head { width: 23px; height: 38px; padding: 1px 0 0 2px; background: var(--strip); }
.drawer-well { width: 14px; height: 179px; margin-top: 112px; background: var(--well); }

/* Compass */
.compass { grid-area: 1 / 1 / 2 / 4; place-self: start center; width: 395px; height: 129px; padding: 6px 6px 0; }
.compass-head { display: flex; height: 80px; background: linear-gradient(var(--strip), var(--strip)) 0 0 / 100% 39px no-repeat; }
.compass-side { display: flex; flex-direction: column; align-items: center; width: 66px; }
.compass-side .rose { height: 56px; margin: -7px 4px 0 0; }
.compass-side.right { width: 50px; }
.compass-side .pin { align-self: flex-end; margin: 2px 4px 0 0; }
.aim { margin: 29px 4px 0 0; }
.gauge { width: 267px; height: 72px; margin-top: 2px; background: #19202a; font-size: 11px; }
.coords { display: flex; align-items: center; height: 31px; padding-left: 16px; }
.coords label { width: 43px; }
.coords input { width: 98px; height: 31px; margin-right: 23px; padding: 0 3px; }
.coords input + label { width: 47px; }
.coords label:nth-of-type(2) + input { margin-right: 13px; }
.coords button { width: 31px; height: 31px; background: #19202a; }
input { border: 0; border-radius: 0; background: #19202a; color: #fff; font: inherit; }

/* Transform toolbar */
.transform { grid-area: 2 / 2; display: flex; gap: 2px; width: 424px; height: 84px; margin-left: 129px; padding: 5px 5px 7px; }
.group { display: flex; background: var(--well); }
.modes { align-items: center; gap: 9px; width: 158px; padding-left: 13px; }
.move { width: 40px; height: 45px; border: 2px solid #bbb; background: #808286; }
.world { align-items: center; gap: 8px; width: 93px; padding-left: 10px; }
.globe { width: 33px; height: 33px; border: 1px solid #ccc; }
.snaps {
  display: grid;
  grid-template-columns: 24px 16px 38px 16px 16px;
  grid-auto-rows: 29px;
  align-items: center;
  column-gap: 7px;
  width: 157px;
  padding: 2px 0 0 11px;
}
.snaps text { font-size: 11px; }
.snaps .axis text { font-size: 10px; }
.snaps .axis { margin-left: 11px; }
.snaps .padlock { align-self: end; }
.snaps input[type="radio"] {
  appearance: none;
  width: 15px;
  height: 15px;
  margin: 0;
  border: 3px solid #eee;
  border-radius: 50%;
  background: none;
}
.snaps input[type="radio"]:checked { background: radial-gradient(#fff 0 2px, transparent 3px); }
.snaps .step { width: 25px; height: 25px; padding: 0; background: #000; text-align: right; }

/* Bottom edge */
.ledge { grid-area: 3 / 1 / 4 / 3; background: var(--frame); }
.play-panel { grid-area: 2 / 3 / 4 / 4; z-index: 1; display: flex; align-items: flex-end; padding-left: 19px; background: var(--frame); }
.unlock { width: 46px; height: 31px; margin-right: 81px; padding: 8px 0 0 6px; background: var(--well); }
.play { align-items: flex-start; justify-content: flex-start; width: 124px; height: 75px; padding: 11px 0 0 49px; background: var(--well); }
.status { grid-area: 4 / 1 / 5 / 4; display: flex; align-items: center; padding: 0 0 2px 111px; background: var(--bar); white-space: pre; }
.tile { width: 402px; }
```
